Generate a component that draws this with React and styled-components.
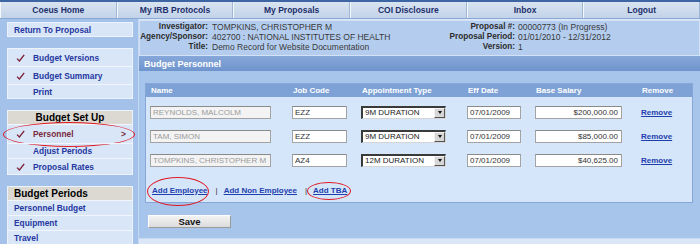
import React from 'react';
import styled, { createGlobalStyle } from 'styled-components';

const GlobalStyle = createGlobalStyle`
  html, body { margin: 0; padding: 0; }
  body {
    width: 700px;
    height: 244px;
    overflow: hidden;
    background: #dbe7f6;
    font-family: "Liberation Sans", Arial, sans-serif;
  }
  * { box-sizing: border-box; }
`;

const Page = styled.div`
  display: flex;
  flex-direction: column;
  width: 700px;
  height: 244px;
`;

const Nav = styled.div`
  display: flex;
  height: 19px;
  border-top: 2px solid #3d64a3;
  border-bottom: 1px solid #89a9d5;
  background: #a6c3e9;
`;

const Tab = styled.div`
  flex: 1;
  display: flex;
  align-items: center;
  justify-content: center;
  background: linear-gradient(#d9e4f1, #c2d2e8);
  border-left: 1px solid #f4f8fc;
  border-right: 1px solid #9fb6d6;
  font-size: 8.5px;
  font-weight: bold;
  color: #1c2f6c;
`;

const Layout = styled.div`
  flex: 1;
  display: flex;
  min-height: 0;
`;

const Sidebar = styled.div`
  width: 139px;
  padding: 3px 5px 0 7px;
  display: flex;
  flex-direction: column;
  gap: 11px;
  background: #a4c2e9;
  border-right: 1px solid #c6d9f2;
`;

const SideBox = styled.div`
  display: flex;
  flex-direction: column;
  flex-shrink: 0;
  background: #d9e6f8;
  border: 1px solid #edf3fc;
`;

const SideHeader = styled.div`
  height: 13px;
  display: flex;
  align-items: center;
  justify-content: ${(p) => (p.$center ? 'center' : 'flex-start')};
  padding-left: ${(p) => (p.$center ? 0 : 6)}px;
  background: #dcd9d3;
  font-size: 10px;
  font-weight: bold;
  color: #000;
`;

const SideItem = styled.div`
  position: relative;
  display: flex;
  align-items: center;
  flex-shrink: 0;
  height: ${(p) => p.$h}px;
  padding-left: 6px;
  font-size: 8.4px;
  font-weight: bold;
  color: ${(p) => (p.$active ? '#7a2a3c' : '#2538a0')};
  border-top: ${(p) => (p.$first ? 'none' : '1px solid #f1f6fd')};
`;

const Mark = styled.span`
  width: 19px;
  display: flex;
  align-items: center;
  padding-left: 2px;
`;

const Chevron = styled.span`
  margin-left: auto;
  margin-right: 6px;
`;

const Ring = styled.span`
  position: absolute;
  left: ${(p) => p.$l}px;
  top: ${(p) => p.$t}px;
  width: ${(p) => p.$w}px;
  height: ${(p) => p.$h}px;
  border: 1.5px solid #e01b24;
  border-radius: 50%;
  pointer-events: none;
`;

const Main = styled.div`
  flex: 1;
  display: flex;
  flex-direction: column;
  padding-top: 1px;
  background: #dbe7f6;
`;

const Info = styled.div`
  display: grid;
  grid-template-columns: 307px 1fr;
  padding: 1px 0 3px;
  background: #b4cdef;
  border: 1px solid #d3e2f6;
`;

const Fields = styled.div`
  display: grid;
  grid-template-columns: 68px auto;
  column-gap: ${(p) => p.$gap}px;
  align-content: start;
  font-size: 8.5px;
  line-height: 10px;
  color: #383838;
  white-space: nowrap;
`;

const Label = styled.span`
  text-align: right;
  font-size: 8.2px;
  font-weight: bold;
  color: #2c2c2c;
`;

const Section = styled.div`
  background: #a7c4eb;
  border-bottom: 1px solid #c9dbf3;
`;

const SectionBar = styled.div`
  height: 15px;
  display: flex;
  align-items: center;
  padding-left: 5px;
  background: linear-gradient(#86a7d9, #6f94cd);
  color: #fff;
  font-size: 9px;
  font-weight: bold;
`;

const SectionBody = styled.div`
  padding: 12px 7px 10px 6px;
`;

const Panel = styled.div`
  background: #d5e5fa;
  border: 1px solid #86a7d8;
  padding-bottom: 6px;
`;

const Row = styled.div`
  display: grid;
  grid-template-columns: 142px 69px 106px 68px 106px 1fr;
  align-items: center;
  height: 24px;
  padding-left: 4px;
`;

const HeadRow = styled(Row)`
  height: 13px;
  margin-bottom: 3px;
  background: #7ea2d6;
  color: #fff;
  font-size: 8px;
  font-weight: bold;
  & > span { padding-left: 1px; }
`;

const Field = styled.input`
  width: ${(p) => p.$w}px;
  height: 13px;
  padding: 0 ${(p) => (p.$right ? 3 : 2)}px 0 2px;
  border: 1px solid #a3a3a3;
  border-top-color: #8a8a8a;
  background: ${(p) => (p.$muted ? '#f3f3f3' : '#fff')};
  color: ${(p) => (p.$muted ? '#9b9b9b' : '#333')};
  font: 8px "Liberation Sans", Arial, sans-serif;
  text-align: ${(p) => (p.$right ? 'right' : 'left')};
  outline: none;
`;

const Select = styled.div`
  width: 85px;
  height: 13px;
  display: flex;
  align-items: center;
  justify-content: space-between;
  padding-left: 2px;
  border-style: solid;
  border-width: 2px 1px 1px 2px;
  border-color: #3a3a3a #d4d4d4 #d4d4d4 #3a3a3a;
  background: #fff;
  font-size: 8px;
  color: #222;
`;

const SelectButton = styled.span`
  width: 11px;
  height: 100%;
  display: flex;
  align-items: center;
  justify-content: center;
  background: #d6d6d6;
  border: 1px solid;
  border-color: #f4f4f4 #555 #555 #f4f4f4;

  &::after {
    content: '';
    border-left: 2.5px solid transparent;
    border-right: 2.5px solid transparent;
    border-top: 3px solid #111;
  }
`;

const Link = styled.a`
  position: relative;
  color: #1f3fae;
  font-weight: bold;
  font-size: 8px;
  text-decoration: underline;
  cursor: pointer;
`;

const Links = styled.div`
  display: flex;
  align-items: center;
  height: 12px;
  margin-top: 12px;
  padding-left: 6px;
`;

const Pipe = styled.span`
  margin: 0 6px 0 8px;
  color: #333;
  font-size: 8px;
`;

const SaveButton = styled.button`
  display: block;
  width: 83px;
  height: 13px;
  margin: 12px 0 0 3px;
  padding: 0;
  background: linear-gradient(#f3f3f3, #dcdcdc);
  border: 1px solid;
  border-color: #fff #9a9a9a #9a9a9a #fff;
  font: bold 9.5px "Liberation Sans", Arial, sans-serif;
  color: #111;
`;

const Check = () => (
  <svg width="9" height="8" viewBox="0 0 9 8">
    <path d="M1 4.6 L3.4 7 L8.2 0.8" fill="none" stroke="#7b1e34" strokeWidth="1.3" />
  </svg>
);

const tabs = ['Coeus Home', 'My IRB Protocols', 'My Proposals', 'COI Disclosure', 'Inbox', 'Logout'];

const people = [
  { name: 'REYNOLDS, MALCOLM', code: 'EZZ', type: '9M DURATION', date: '07/01/2009', salary: '$200,000.00' },
  { name: 'TAM, SIMON', code: 'EZZ', type: '9M DURATION', date: '07/01/2009', salary: '$85,000.00' },
  { name: 'TOMPKINS, CHRISTOPHER M', code: 'AZ4', type: '12M DURATION', date: '07/01/2009', salary: '$40,625.00' },
];

const App = () => {
  return (
    <Page>
      <GlobalStyle />
      <Nav>
        {tabs.map((t) => (
          <Tab key={t}>{t}</Tab>
        ))}
      </Nav>
      <Layout>
        <Sidebar>
          <SideBox>
            <SideItem $h={13} $first>Return To Proposal</SideItem>
          </SideBox>

          <SideBox>
            <SideItem $h={17} $first><Mark><Check /></Mark>Budget Versions</SideItem>
            <SideItem $h={18}><Mark><Check /></Mark>Budget Summary</SideItem>
            <SideItem $h={14}><Mark />Print</SideItem>
          </SideBox>

          <SideBox>
            <SideHeader $center>Budget Set Up</SideHeader>
            <SideItem $h={19} $active>
              <Mark><Check /></Mark>Personnel<Chevron>&gt;</Chevron>
              <Ring $l={-5} $t={-3} $w={132} $h={25} />
            </SideItem>
            <SideItem $h={15}><Mark />Adjust Periods</SideItem>
            <SideItem $h={16}><Mark><Check /></Mark>Proposal Rates</SideItem>
          </SideBox>

          <SideBox>
            <SideHeader>Budget Periods</SideHeader>
            <SideItem $h={15}>Personnel Budget</SideItem>
            <SideItem $h={15}>Equipment</SideItem>
            <SideItem $h={15}>Travel</SideItem>
          </SideBox>
        </Sidebar>

        <Main>
          <Info>
            <Fields $gap={4}>
              <Label>Investigator:</Label><span>TOMPKINS, CHRISTOPHER M</span>
              <Label>Agency/Sponsor:</Label><span>402700 : NATIONAL INSTITUTES OF HEALTH</span>
              <Label>Title:</Label><span>Demo Record for Website Documentation</span>
            </Fields>
            <Fields $gap={3}>
              <Label>Proposal #:</Label><span>00000773 (In Progress)</span>
              <Label>Proposal Period:</Label><span>01/01/2010 - 12/31/2012</span>
              <Label>Version:</Label><span>1</span>
            </Fields>
          </Info>

          <Section>
            <SectionBar>Budget Personnel</SectionBar>
            <SectionBody>
              <Panel>
                <HeadRow>
                  <span>Name</span>
                  <span>Job Code</span>
                  <span>Appointment Type</span>
                  <span>Eff Date</span>
                  <span>Base Salary</span>
                  <span>Remove</span>
                </HeadRow>
                {people.map((p) => (
                  <Row key={p.name}>
                    <Field $w={121} $muted readOnly value={p.name} />
                    <Field $w={55} readOnly value={p.code} />
                    <Select>
                      {p.type}
                      <SelectButton />
                    </Select>
                    <Field $w={54} readOnly value={p.date} />
                    <Field $w={87} $right readOnly value={p.salary} />
                    <Link>Remove</Link>
                  </Row>
                ))}
                <Links>
                  <Link>
                    Add Employee
                    <Ring $l={-5} $t={-9} $w={62} $h={29} />
                  </Link>
                  <Pipe>|</Pipe>
                  <Link>Add Non Employee</Link>
                  <Pipe>|</Pipe>
                  <Link>
                    Add TBA
                    <Ring $l={-6} $t={-4} $w={44} $h={18} />
                  </Link>
                </Links>
              </Panel>
              <SaveButton>Save</SaveButton>
            </SectionBody>
          </Section>
        </Main>
      </Layout>
    </Page>
  );
};

export default App;
